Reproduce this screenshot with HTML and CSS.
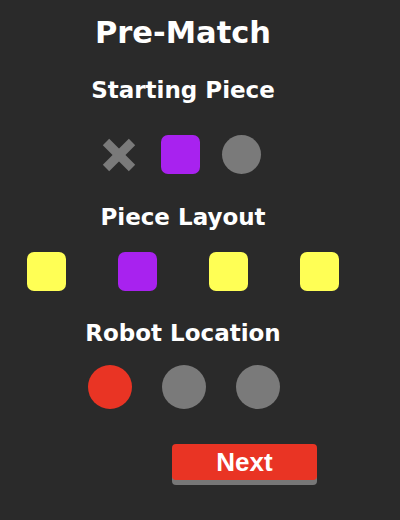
FILE: index.html
```html
<!DOCTYPE html>
<html>
<head>
<meta charset="utf-8">
<link rel="stylesheet" href="styles.css">
</head>
<body>
<main class="screen">
  <h1 class="title">Pre-Match</h1>

  <h2 class="heading heading-start">Starting Piece</h2>
  <div class="row row-start">
    <div class="slot">
      <svg class="cross" width="34" height="34" viewBox="0 0 34 34">
        <line x1="4" y1="4" x2="30" y2="30" />
        <line x1="30" y1="4" x2="4" y2="30" />
      </svg>
    </div>
    <div class="slot"><div class="square purple"></div></div>
    <div class="slot"><div class="dot gray"></div></div>
  </div>

  <h2 class="heading heading-layout">Piece Layout</h2>
  <div class="row row-layout">
    <div class="square yellow"></div>
    <div class="square purple"></div>
    <div class="square yellow"></div>
    <div class="square yellow"></div>
  </div>

  <h2 class="heading heading-robot">Robot Location</h2>
  <div class="row row-robot">
    <div class="big-dot red"></div>
    <div class="big-dot gray"></div>
    <div class="big-dot gray"></div>
  </div>

  <div class="actions">
    <button class="next">Next</button>
  </div>
</main>
</body>
</html>
```
FILE: styles.css
```css
html, body {
  margin: 0;
  padding: 0;
  background: #2a2a2a;
}

.screen {
  width: 366px;
  height: 520px;
  display: flex;
  flex-direction: column;
  align-items: center;
  font-family: "DejaVu Sans", Verdana, sans-serif;
  color: #ffffff;
}

.title {
  margin: 15px 0 0;
  font-size: 30.5px;
  line-height: 35px;
  font-weight: bold;
}

.heading {
  margin: 0;
  font-size: 23px;
  line-height: 26px;
  font-weight: bold;
}

.heading-start { margin-top: 27px; }
.heading-layout { margin-top: 30px; }
.heading-robot { margin-top: 29px; }

.row {
  display: flex;
  align-items: center;
}

.row-start {
  margin-top: 32px;
  gap: 22px;
  padding-right: 6px;
}

.slot {
  width: 39px;
  height: 39px;
  display: flex;
  align-items: center;
  justify-content: center;
}

.cross line {
  stroke: #7a7a7a;
  stroke-width: 9;
}

.square {
  width: 39px;
  height: 39px;
  border-radius: 7px;
}

.dot {
  width: 39px;
  height: 39px;
  border-radius: 50%;
}

.big-dot {
  width: 44px;
  height: 44px;
  border-radius: 50%;
}

.purple { background: #a822ef; }
.yellow { background: #ffff55; }
.gray { background: #7a7a7a; }
.red { background: #e93424; }

.row-layout {
  margin-top: 22px;
  gap: 52px;
}

.row-robot {
  margin-top: 19px;
  gap: 30px;
  padding-left: 2px;
}

.actions {
  align-self: stretch;
  display: flex;
  justify-content: flex-end;
  padding-right: 49px;
  margin-top: 35px;
}

.next {
  width: 145px;
  height: 36px;
  border: none;
  border-radius: 4px;
  background: #e93424;
  box-shadow: 0 5px 0 #777777;
  color: #ffffff;
  font-family: "Liberation Sans", Arial, sans-serif;
  font-weight: bold;
  font-size: 26px;
  line-height: 36px;
  padding: 0;
}
```
